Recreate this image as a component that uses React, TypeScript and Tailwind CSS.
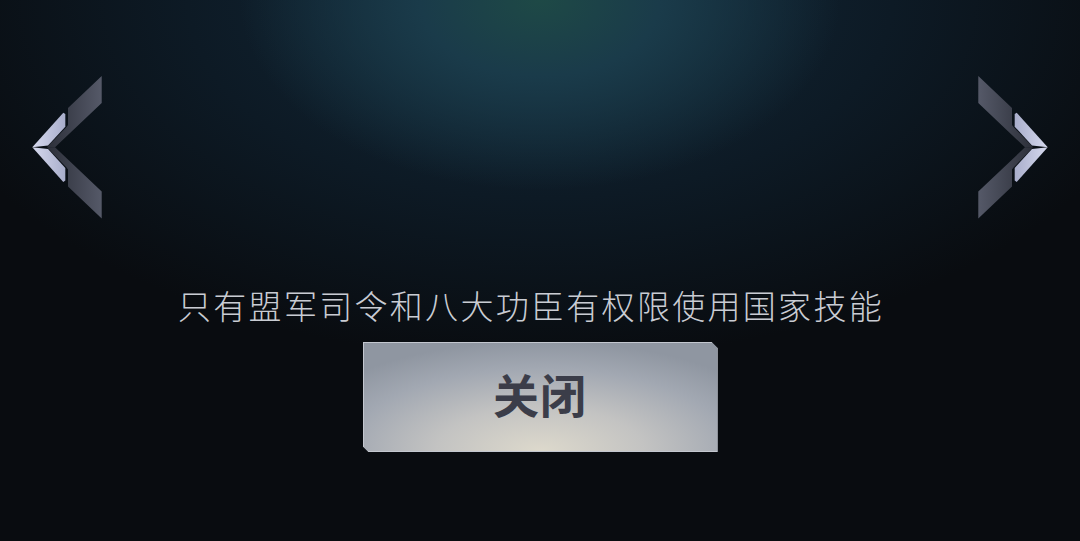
import type { SVGProps } from 'react';

// nav chevron, drawn pointing left; the right one is mirrored
const Chevron = (props: SVGProps<SVGSVGElement>) => (
  <svg width="72" height="145" viewBox="31 15 72 145" {...props}>
    <defs>
      <linearGradient id="lite" x1="0" y1="0" x2="1" y2="0">
        <stop offset="0%" stopColor="#d6d9ee" />
        <stop offset="100%" stopColor="#a9aecb" />
      </linearGradient>
      <linearGradient id="dark" x1="0" y1="0" x2="1" y2="0">
        <stop offset="0%" stopColor="#2c2f39" />
        <stop offset="100%" stopColor="#555968" />
      </linearGradient>
    </defs>
    {/* dark outer arms */}
    <polygon points="68,48 101.7,16 101.7,43 55,87.3 47,87.3 66.5,67 68,65" fill="url(#dark)" />
    <polygon points="68,126.6 101.7,158.6 101.7,131.6 55,87.3 47,87.3 66.5,107.6 68,109.6" fill="url(#dark)" />
    {/* light inner blades */}
    <polygon points="63.3,52.7 65.3,54 65.3,66.7 48,85.5 32.3,87.3" fill="url(#lite)" />
    <polygon points="63.3,121.9 65.3,120.6 65.3,107.9 48,89.1 32.3,87.3" fill="url(#lite)" />
  </svg>
);

export default function App() {
  return (
    <div className="w-full h-[541px] overflow-hidden bg-[#090c10] bg-[radial-gradient(ellipse_300px_190px_at_50%_0%,#1e4946_0%,#1a3b4a_40%,rgba(16,36,50,0)_100%),radial-gradient(ellipse_640px_360px_at_50%_0%,#132a3b_0%,#0d1a25_55%,rgba(9,12,16,0)_100%)] flex flex-col items-center font-['Noto_Sans_CJK_SC','Noto_Sans',sans-serif]">
      <div className="w-full flex justify-between px-[31px] pt-[75px]">
        <Chevron />
        <Chevron className="-scale-x-100" />
      </div>

      <p className="mt-[65px] mr-[18px] text-[33px] leading-[40px] tracking-[2.3px] text-[#c9ccd3] font-light">
        只有盟军司令和八大功臣有权限使用国家技能
      </p>

      <button className="mt-[17px] w-[355px] h-[110px] pb-[8px] flex items-center justify-center border border-[#c3c7cf] bg-[#a3a9b3] bg-[radial-gradient(ellipse_260px_110px_at_50%_100%,#ddd9cc_0%,#c3c3c2_40%,#a2a8b2_75%,#8f96a1_100%)] [clip-path:polygon(0_0,calc(100%-6px)_0,100%_6px,100%_100%,6px_100%,0_calc(100%-6px))]">
        <span className="text-[46px] leading-none font-bold text-[#3b3d49] tracking-[1px]">关闭</span>
      </button>
    </div>
  );
}
